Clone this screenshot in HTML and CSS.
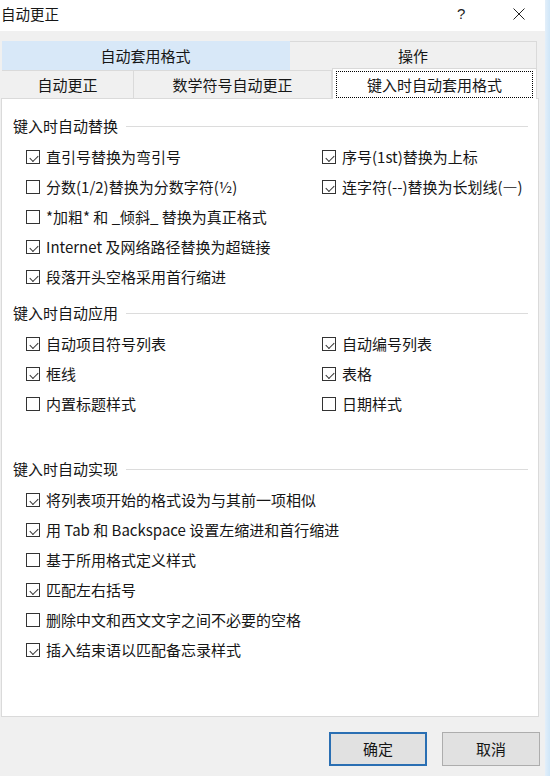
FILE: index.html
```html
<!DOCTYPE html>
<html lang="zh-CN">
<head>
<meta charset="utf-8">
<title>自动更正</title>
<link rel="stylesheet" href="styles.css">
</head>
<body>
<div class="screen">
  <div class="window">
    <div class="titlebar">
      <span class="title">自动更正</span>
      <span class="help">?</span>
      <svg class="close" width="12" height="12" viewBox="0 0 12 12"><path d="M0.5 0.5 L11.5 11.5 M11.5 0.5 L0.5 11.5" stroke="#222" stroke-width="1" fill="none"/></svg>
    </div>
    <div class="tabs">
      <div class="tabrow row1">
        <div class="tab t-a hl">自动套用格式</div>
        <div class="tab t-b">操作</div>
      </div>
      <div class="tabrow row2">
        <div class="tab t-c">自动更正</div>
        <div class="tab t-d">数学符号自动更正</div>
        <div class="tab t-e sel"><span class="focus">键入时自动套用格式</span></div>
      </div>
    </div>
    <div class="panel">
      <div class="section s1">
        <div class="heading"><span>键入时自动替换</span><i class="rule"></i></div>
        <div class="grid">
          <label class="cb on"><b class="box"></b>直引号替换为弯引号</label>
          <label class="cb on"><b class="box"></b>序号(1st)替换为上标</label>
          <label class="cb"><b class="box"></b>分数(1/2)替换为分数字符(½)</label>
          <label class="cb on"><b class="box"></b>连字符(--)替换为长划线(—)</label>
          <label class="cb full"><b class="box"></b>*加粗* 和 _倾斜_ 替换为真正格式</label>
          <label class="cb on full"><b class="box"></b>Internet 及网络路径替换为超链接</label>
          <label class="cb on full"><b class="box"></b>段落开头空格采用首行缩进</label>
        </div>
      </div>
      <div class="section s2">
        <div class="heading"><span>键入时自动应用</span><i class="rule"></i></div>
        <div class="grid">
          <label class="cb on"><b class="box"></b>自动项目符号列表</label>
          <label class="cb on"><b class="box"></b>自动编号列表</label>
          <label class="cb on"><b class="box"></b>框线</label>
          <label class="cb on"><b class="box"></b>表格</label>
          <label class="cb"><b class="box"></b>内置标题样式</label>
          <label class="cb"><b class="box"></b>日期样式</label>
        </div>
      </div>
      <div class="section s3">
        <div class="heading"><span>键入时自动实现</span><i class="rule"></i></div>
        <div class="grid">
          <label class="cb on full"><b class="box"></b>将列表项开始的格式设为与其前一项相似</label>
          <label class="cb on full"><b class="box"></b>用 Tab 和 Backspace 设置左缩进和首行缩进</label>
          <label class="cb full"><b class="box"></b>基于所用格式定义样式</label>
          <label class="cb on full"><b class="box"></b>匹配左右括号</label>
          <label class="cb full"><b class="box"></b>删除中文和西文文字之间不必要的空格</label>
          <label class="cb on full"><b class="box"></b>插入结束语以匹配备忘录样式</label>
        </div>
      </div>
    </div>
    <div class="buttons">
      <div class="btn primary">确定</div>
      <div class="btn">取消</div>
    </div>
  </div>
  <div class="edge"></div>
</div>
</body>
</html>
```
FILE: styles.css
```css
* { box-sizing: border-box; }
html, body { margin: 0; padding: 0; }
body {
  width: 550px;
  height: 776px;
  overflow: hidden;
  background: #f0f0f0;
  font-family: "Noto Sans CJK SC", "Noto Sans", sans-serif;
  font-size: 15px;
  color: #161616;
}
.screen { display: flex; height: 776px; }
.window { width: 545px; height: 776px; background: #f0f0f0; }
.edge { width: 5px; height: 776px; background: linear-gradient(to right, #e3effa, #cfe6f8); }

.titlebar {
  height: 31px;
  background: #fff;
  display: flex;
  align-items: center;
  padding-left: 1px;
  line-height: 20px;
}
.title { font-size: 14.5px; flex: 1; margin-top: -4px; }
.help { font-size: 15px; color: #222; width: 20px; margin-right: 36px; margin-top: -3px; font-family: "Liberation Sans", sans-serif; }
.close { margin-right: 20px; margin-top: -3px; }

.tabs { margin: 10px 0 0 2px; width: 535px; }
.tabrow { display: flex; }
.row1 { height: 29px; }
.row2 { height: 28px; position: relative; }
.tab {
  display: flex;
  align-items: center;
  justify-content: center;
  line-height: 20px;
  background: #f0f0f0;
  border-top: 1px solid #dadada;
  border-right: 1px solid #dadada;
}
.row1 .tab { height: 29px; }
.row2 .tab { height: 28px; }
.t-a { width: 288px; }
.t-b { width: 247px; }
.t-c { width: 132px; }
.t-d { width: 198px; }
.t-e { width: 205px; }
.hl { background: #d8e8f8; border-top-color: #d8e8f8; border-right-color: #d8e8f8; }
.tab.sel {
  background: #fff;
  height: 31px;
  margin-top: -2px;
  border: 1px solid #d9d9d9;
  border-bottom: none;
  padding: 2px 3px 0 3px;
  align-items: stretch;
  position: relative;
  z-index: 1;
}
.focus {
  flex: 1;
  border: 1px dotted #000;
  display: flex;
  align-items: center;
  justify-content: center;
  margin-bottom: 1px;
}

.panel {
  margin-left: 1px;
  width: 538px;
  height: 619px;
  background: #fff;
  border: 1px solid #dadada;
  padding: 17px 10px 0 11px;
}
.heading {
  display: flex;
  align-items: center;
  height: 20px;
  line-height: 20px;
  margin-bottom: 6px;
}
.rule { flex: 1; height: 1px; background: #dcdcdc; margin-left: 8px; margin-top: 1px; }
.s2 { margin-top: 11px; }
.s3 { margin-top: 40px; }
.s3 .grid { margin-top: 3px; }
.grid {
  display: grid;
  grid-template-columns: 296px 1fr;
  padding-left: 13px;
}
.cb {
  display: flex;
  align-items: center;
  height: 30px;
  line-height: 20px;
  white-space: nowrap;
}
.cb.full { grid-column: 1 / 3; }
.box {
  width: 14px;
  height: 14px;
  border: 1px solid #333;
  background: #fff;
  margin-right: 6px;
  flex: none;
  position: relative;
}
.cb.on .box::after {
  content: "";
  position: absolute;
  left: 2.5px;
  top: 1.5px;
  width: 7px;
  height: 4px;
  border-left: 1px solid #333;
  border-bottom: 1px solid #333;
  transform: translate(0, 2px) rotate(-45deg);
  transform-origin: center;
}

.buttons {
  display: flex;
  justify-content: flex-end;
  gap: 15px;
  padding-right: 5px;
  margin-top: 15px;
}
.btn {
  width: 98px;
  height: 34px;
  background: #e1e1e1;
  border: 1px solid #adadad;
  display: flex;
  align-items: center;
  justify-content: center;
  line-height: 20px;
}
.btn.primary { border: 2px solid #2a6fb3; }
```
